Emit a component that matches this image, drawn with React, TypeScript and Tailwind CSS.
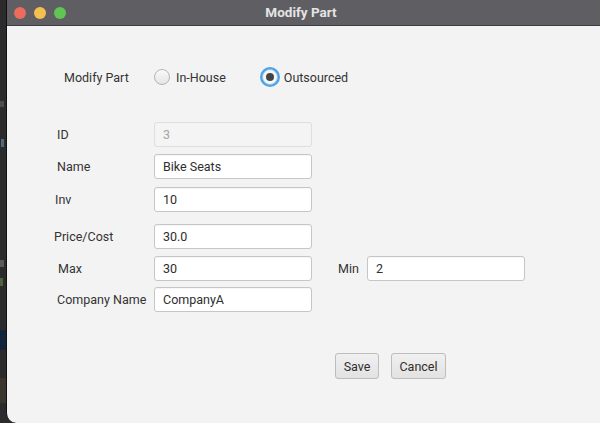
import React from "react";

const font = { fontFamily: "Roboto, 'Liberation Sans', sans-serif" };

function Field({ value, disabled }: { value: string; disabled?: boolean }) {
  return (
    <div
      className={
        "h-[25px] w-[158px] rounded-[3px] border flex items-center pl-[8px] pt-[2px] text-[12.5px] " +
        (disabled
          ? "bg-[#f4f4f4] border-[#dedede] text-[#a6a6a6]"
          : "bg-white border-[#c6c6c6] text-[#2e2e2e] shadow-[inset_0_1px_1px_rgba(0,0,0,0.04)]")
      }
    >
      {value}
    </div>
  );
}

function Row({
  label,
  value,
  labelPad,
  mt,
  disabled,
  children,
}: {
  label: string;
  value: string;
  labelPad: string;
  mt: string;
  disabled?: boolean;
  children?: React.ReactNode;
}) {
  return (
    <div className={"flex items-center " + mt}>
      <div className={"w-[147px] pt-[2px] text-[12.5px] text-[#333] " + labelPad}>{label}</div>
      <Field value={value} disabled={disabled} />
      {children}
    </div>
  );
}

function Btn({ label, w }: { label: string; w: string }) {
  return (
    <div
      className={
        "h-[26px] pt-[2px] rounded-[3px] border border-[#bdbdbd] bg-gradient-to-b from-[#f0f0f0] to-[#e2e2e2] flex items-center justify-center text-[12.5px] text-[#2e2e2e] " +
        w
      }
    >
      {label}
    </div>
  );
}

export default function App() {
  return (
    <div className="w-[600px] h-[423px] flex bg-[#2b2b2c] overflow-hidden" style={font}>
      {/* background strip */}
      <div className="w-[6px] relative bg-[#2b2b2c] shrink-0">
        <div className="absolute left-0 top-[101px] w-[4px] h-[6px] bg-[#6e6e6e] opacity-50" />
        <div className="absolute left-[1px] top-[139px] w-[3px] h-[8px] bg-[#6f8fb0] opacity-60" />
        <div className="absolute left-0 top-[260px] w-[4px] h-[7px] bg-[#8a8a8a] opacity-50" />
        <div className="absolute left-0 top-[278px] w-[3px] h-[8px] bg-[#5e7d4a] opacity-70" />
        <div className="absolute left-0 top-[330px] w-[6px] h-[20px] bg-[#13243a]" />
        <div className="absolute left-0 top-[378px] w-[6px] h-[25px] bg-[#3a362e]" />
      </div>
      <div className="flex-1 flex flex-col bg-[#f3f3f3] border-l border-[#111] rounded-bl-[10px] overflow-hidden">
        {/* title bar */}
        <div className="h-[26px] shrink-0 bg-[#5f5e63] border-b border-[#3c3c3e] flex items-center relative">
          <div className="flex items-center gap-[8px] pl-[7px]">
            <div className="w-[12px] h-[12px] rounded-full bg-[#ed6a5e]" />
            <div className="w-[12px] h-[12px] rounded-full bg-[#f5bf4f]" />
            <div className="w-[12px] h-[12px] rounded-full bg-[#61c554]" />
          </div>
          <div className="flex-1 text-center text-[13.5px] font-bold text-[#e4e4e4] pr-[64px]">
            Modify Part
          </div>
        </div>

        {/* radio row */}
        <div className="flex items-center h-[20px] mt-[41px] text-[12.5px] text-[#333]">
          <div className="pl-[57px] w-[147px] pt-[2px]">Modify Part</div>
          <div className="w-[16px] h-[16px] rounded-full border border-[#b3b3b3] bg-gradient-to-b from-[#fafafa] to-[#e4e4e4]" />
          <div className="ml-[6px] pt-[2px]">In-House</div>
          <div className="ml-[34px] w-[20px] h-[20px] rounded-full bg-[#4aa3e8] flex items-center justify-center">
            <div className="w-[16px] h-[16px] rounded-full bg-[#f6f6f6] border border-[#8fc2ea] flex items-center justify-center">
              <div className="w-[8px] h-[8px] rounded-full bg-[#444]" />
            </div>
          </div>
          <div className="ml-[4px] pt-[2px]">Outsourced</div>
        </div>

        {/* form */}
        <div className="flex flex-col">
          <Row label="ID" value="3" labelPad="pl-[50px]" mt="mt-[35px]" disabled />
          <Row label="Name" value="Bike Seats" labelPad="pl-[50px]" mt="mt-[7px]" />
          <Row label="Inv" value="10" labelPad="pl-[48px]" mt="mt-[8px]" />
          <Row label="Price/Cost" value="30.0" labelPad="pl-[47px]" mt="mt-[12px]" />
          <Row label="Max" value="30" labelPad="pl-[51px]" mt="mt-[7px]">
            <div className="ml-[26px] w-[29px] pt-[2px] text-[12.5px] text-[#333]">Min</div>
            <Field value="2" />
          </Row>
          <Row label="Company Name" value="CompanyA" labelPad="pl-[50px]" mt="mt-[6px]" />
        </div>

        {/* buttons */}
        <div className="flex mt-[41px] pl-[328px] gap-[12px]">
          <Btn label="Save" w="w-[44px]" />
          <Btn label="Cancel" w="w-[55px]" />
        </div>
      </div>
    </div>
  );
}
